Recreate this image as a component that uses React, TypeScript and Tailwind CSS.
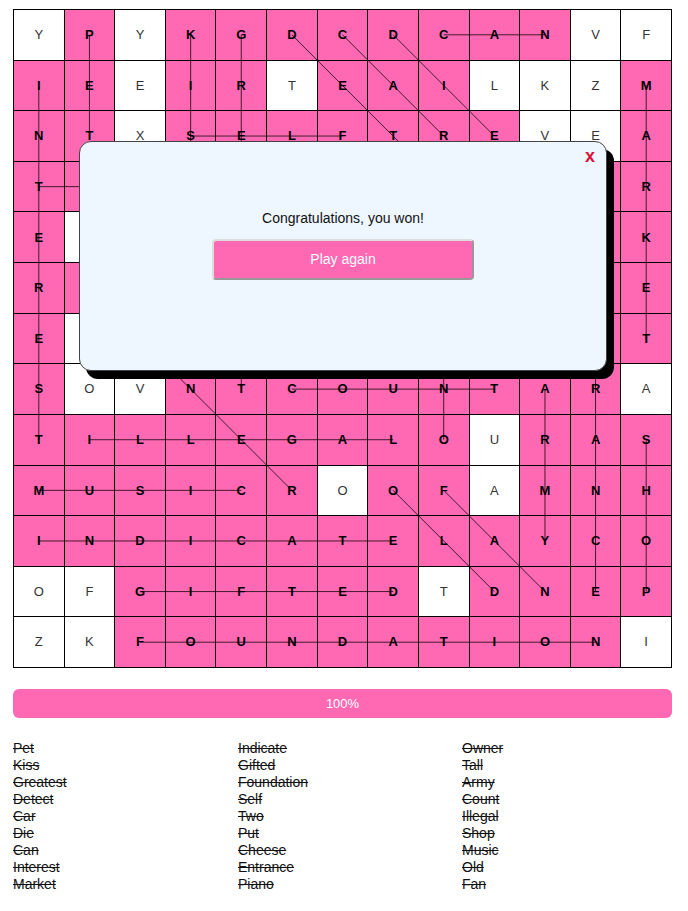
import React from 'react';

const rows = [
  'YPYKGDCDCANVF',
  'IEEIRTEAILKZM',
  'NTXSELFTREVEA',
  'TWOSAGHJEBQNR',
  'EXPUTWMHPCOEK',
  'ROCHEESEIVTNE',
  'ELWBSKUTALLTT',
  'SOVNTCOUNTARA',
  'TILLEGALOURAS',
  'MUSICROOFAMNH',
  'INDICATELAYCO',
  'OFGIFTEDTDNEP',
  'ZKFOUNDATIONI',
];

// [startRow, startCol, endRow, endCol]
const found: [number, number, number, number][] = [
  [0, 1, 2, 1],
  [1, 0, 8, 0],
  [0, 3, 3, 3],
  [0, 4, 7, 4],
  [0, 5, 5, 10],
  [0, 6, 2, 8],
  [0, 7, 2, 9],
  [0, 8, 0, 10],
  [1, 12, 6, 12],
  [2, 3, 2, 6],
  [3, 0, 3, 2],
  [4, 2, 4, 4],
  [5, 2, 5, 7],
  [6, 7, 6, 10],
  [5, 1, 9, 5],
  [4, 8, 8, 8],
  [11, 11, 3, 11],
  [7, 5, 7, 9],
  [7, 10, 10, 10],
  [8, 12, 11, 12],
  [8, 1, 8, 7],
  [9, 0, 9, 4],
  [9, 7, 11, 9],
  [9, 8, 11, 10],
  [10, 0, 10, 7],
  [11, 2, 11, 7],
  [12, 2, 12, 11],
];

const words = [
  ['Pet', 'Kiss', 'Greatest', 'Detect', 'Car', 'Die', 'Can', 'Interest', 'Market'],
  ['Indicate', 'Gifted', 'Foundation', 'Self', 'Two', 'Put', 'Cheese', 'Entrance', 'Piano'],
  ['Owner', 'Tall', 'Army', 'Count', 'Illegal', 'Shop', 'Music', 'Old', 'Fan'],
];

const SIZE = 659;
const CELL = (SIZE - 14) / 13;
const center = (i: number) => 1 + i * (CELL + 1) + CELL / 2;

const App: React.FC = () => {
  const marked = new Set<string>();
  found.forEach(([r1, c1, r2, c2]) => {
    const len = Math.max(Math.abs(r2 - r1), Math.abs(c2 - c1));
    const dr = Math.sign(r2 - r1);
    const dc = Math.sign(c2 - c1);
    for (let i = 0; i <= len; i++) marked.add(`${r1 + dr * i}-${c1 + dc * i}`);
  });

  return (
    <div className="min-h-screen bg-white px-[13px] pt-[9px] pb-4 font-['Liberation_Sans',Arial,sans-serif] text-black">
      <div className="relative w-[659px] h-[659px]">
        <div className="grid h-full w-full grid-cols-13 grid-rows-13 gap-px bg-black p-px">
          {rows.map((row, r) =>
            row.split('').map((ch, c) => {
              const on = marked.has(`${r}-${c}`);
              return (
                <div
                  key={`${r}-${c}`}
                  className={
                    on
                      ? 'flex items-center justify-center bg-[#ff69b4] text-[13px] font-bold'
                      : 'flex items-center justify-center bg-white text-[13px] text-[#333]'
                  }
                >
                  {ch}
                </div>
              );
            }),
          )}
        </div>

        <svg className="pointer-events-none absolute inset-0" width={SIZE} height={SIZE} viewBox={`0 0 ${SIZE} ${SIZE}`}>
          {found.map(([r1, c1, r2, c2], i) => (
            <line
              key={i}
              x1={center(c1)}
              y1={center(r1)}
              x2={center(c2)}
              y2={center(r2)}
              stroke="rgba(0,0,0,0.75)"
              strokeWidth={1}
            />
          ))}
        </svg>

        {/* win dialog */}
        <div className="absolute left-[66px] top-[132px] h-[230px] w-[528px] rounded-xl border border-[#444] bg-[#eef6ff] shadow-[7px_8px_0_#000]">
          <span className="absolute right-[11px] top-[5px] text-[18px] font-bold leading-none text-[#dc143c]">x</span>
          <div className="flex flex-col items-center pt-[68px]">
            <p className="text-[14px] leading-[16px] text-[#111]">Congratulations, you won!</p>
            <button className="mt-[13px] h-[41px] w-[262px] rounded-[4px] border-2 border-t-[#ddd] border-l-[#ddd] border-r-[#999] border-b-[#999] bg-[#ff69b4] text-[14px] text-white">
              Play again
            </button>
          </div>
        </div>
      </div>

      <div className="mt-[21px] flex h-[29px] w-[659px] items-center justify-center rounded-md bg-[#ff69b4] text-[13px] text-white">
        100%
      </div>

      <div className="mt-[22px] grid grid-cols-[225px_224px_1fr] text-[14px] leading-[17px] text-[#111]">
        {words.map((col, i) => (
          <ul key={i}>
            {col.map((w) => (
              <li key={w} className="line-through">
                {w}
              </li>
            ))}
          </ul>
        ))}
      </div>
    </div>
  );
};

export default App;
